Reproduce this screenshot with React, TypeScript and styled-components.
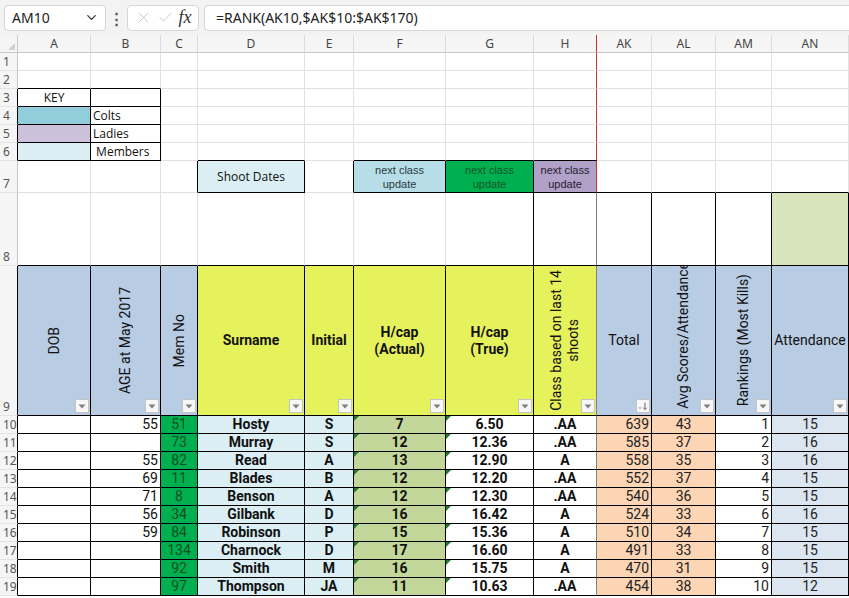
import React from "react";
import styled, { createGlobalStyle } from "styled-components";
import { ChevronDown, X, Check } from "lucide-react";

const GRID = "#e1e1e1";
const INK = "#000";
const RED = "#c8322e";
const FREEZE = "#808080";
const BLUE = "#b8cce4";
const LIME = "#e6f25c";

const GlobalStyle = createGlobalStyle`
  html, body { margin: 0; padding: 0; background: #fff; overflow: hidden; }
  body { font-family: Roboto, "Noto Sans", sans-serif; color: #111; }
`;

const Toolbar = styled.div`
  height: 35px;
  display: flex;
  align-items: center;
  padding-left: 4px;
  background: #f3f3f3;
  box-sizing: border-box;
`;

const NameBox = styled.div`
  width: 102px;
  height: 26px;
  box-sizing: border-box;
  display: flex;
  align-items: center;
  justify-content: space-between;
  padding: 0 6px 0 7px;
  background: #fff;
  border: 1px solid #d6d6d6;
  border-radius: 4px;
  font: 14px "Noto Sans", sans-serif;
  color: #222;
`;

const Dots = styled.div`
  width: 21px;
  text-align: center;
  font: bold 15px "Noto Sans", sans-serif;
  color: #555;
`;

const FxBox = styled.div`
  width: 72px;
  height: 26px;
  box-sizing: border-box;
  display: flex;
  align-items: center;
  justify-content: space-around;
  padding: 0 4px;
  background: #fff;
  border: 1px solid #d6d6d6;
  border-radius: 4px;
`;

const Fx = styled.span`
  font: italic 18px "Liberation Serif", serif;
  color: #333;
`;

const FormulaBox = styled.div`
  flex: 1;
  height: 26px;
  margin: 0 -6px 0 5px;
  box-sizing: border-box;
  display: flex;
  align-items: center;
  padding-left: 11px;
  background: #fff;
  border: 1px solid #d6d6d6;
  border-radius: 4px;
  font: 14px "Noto Sans", sans-serif;
  color: #222;
`;

const Sheet = styled.div`
  display: grid;
  grid-template-columns: 18px 73px 70px 37px 107px 49px 92px 88px 63px 55px 64px 56px 77px;
  grid-template-rows: 18px repeat(6, 18px) 32px 73px 150px repeat(10, 18px);
`;

const Corner = styled.div`
  position: relative;
  background: #f5f5f5;
  border-right: 1px solid #c8c8c8;
  border-bottom: 1px solid #c8c8c8;
  box-sizing: border-box;
  &::after {
    content: "";
    position: absolute;
    right: 2px;
    bottom: 2px;
    border-bottom: 7px solid #d0d0d0;
    border-left: 7px solid transparent;
  }
`;

const ColHead = styled.div<{ $edge?: string }>`
  display: flex;
  align-items: center;
  justify-content: center;
  background: #f5f5f5;
  border-right: 1px solid ${(p) => p.$edge || "#dcdcdc"};
  border-bottom: 1px solid #c8c8c8;
  box-sizing: border-box;
  font: 12px "Noto Sans", sans-serif;
  color: #444;
`;

const RowHead = styled.div<{ $edge: string }>`
  display: flex;
  align-items: flex-end;
  padding: 0 0 0 3px;
  background: #f5f5f5;
  border-right: 1px solid ${(p) => p.$edge};
  border-bottom: 1px solid #e4e4e4;
  box-sizing: border-box;
  font: 12px/16px "Noto Sans", sans-serif;
  color: #555;
`;

type Kind = "data" | "key" | "small";

const fonts: Record<Kind, string> = {
  data: `font: 14px/17px Roboto, sans-serif;`,
  key: `font: 12px/16px "Open Sans", sans-serif; color: #222;`,
  small: `font: 11px/14px "Liberation Sans", sans-serif; text-align: center;`,
};

const Cell = styled.div<{
  $bg?: string;
  $al: string;
  $br: string;
  $bb: string;
  $kind: Kind;
  $bold?: boolean;
  $color?: string;
  $end?: boolean;
}>`
  position: relative;
  display: flex;
  align-items: ${(p) => (p.$end ? "flex-end" : "center")};
  justify-content: ${(p) => p.$al};
  padding: ${(p) => (p.$end ? "0 1px 6px" : "0 2px")};
  overflow: hidden;
  white-space: nowrap;
  box-sizing: border-box;
  background: ${(p) => p.$bg || "#fff"};
  border-right: 1px solid ${(p) => p.$br};
  border-bottom: 1px solid ${(p) => p.$bb};
  ${(p) => fonts[p.$kind]}
  font-weight: ${(p) => (p.$bold ? 700 : 400)};
  color: ${(p) => p.$color || "#111"};
  text-align: center;
`;

const VText = styled.span`
  writing-mode: vertical-rl;
  transform: rotate(180deg);
  white-space: nowrap;
  text-align: center;
  line-height: 17px;
`;

const FilterBtn = styled.span`
  position: absolute;
  right: 1px;
  bottom: 2px;
  width: 14px;
  height: 14px;
  box-sizing: border-box;
  display: flex;
  align-items: center;
  justify-content: center;
  background: #f7f7f7;
  border: 1px solid #c4c4c4;
`;

const ErrMark = styled.span`
  position: absolute;
  top: 0;
  left: 0;
  border-top: 5px solid #1f7a35;
  border-right: 5px solid transparent;
`;

type Spec = {
  t?: React.ReactNode;
  bg?: string;
  box?: boolean;
  al?: "l" | "c" | "r";
  b?: boolean;
  kind?: Kind;
  color?: string;
  v?: boolean;
  end?: boolean;
  filter?: "f" | "s";
  mark?: boolean;
};

const COLS = ["A", "B", "C", "D", "E", "F", "G", "H", "AK", "AL", "AM", "AN"];

const blank = (): Spec[] => COLS.map(() => ({}));

const sheet: Spec[][] = [];
for (let i = 0; i < 8; i++) sheet.push(blank());

const nextClass = (
  <>
    next class
    <br />
    update
  </>
);

sheet[2][0] = { t: "KEY", box: true, kind: "key" };
sheet[2][1] = { box: true };
sheet[3][0] = { bg: "#92cddc", box: true };
sheet[3][1] = { t: "Colts", box: true, al: "l", kind: "key" };
sheet[4][0] = { bg: "#ccc0da", box: true };
sheet[4][1] = { t: "Ladies", box: true, al: "l", kind: "key" };
sheet[5][0] = { bg: "#daeef3", box: true };
sheet[5][1] = { t: "\u00a0Members", box: true, al: "l", kind: "key" };

sheet[6][3] = { t: "Shoot Dates", bg: "#daeef3", box: true, kind: "key" };
sheet[6][5] = { t: nextClass, bg: "#b7dee8", box: true, kind: "small", color: "#2a3a40" };
sheet[6][6] = { t: nextClass, bg: "#00b050", box: true, kind: "small", color: "#14562a" };
sheet[6][7] = { t: nextClass, bg: "#b1a0c7", box: true, kind: "small", color: "#262030" };

sheet[7][7] = { box: true };
sheet[7][8] = { box: true };
sheet[7][9] = { box: true };
sheet[7][10] = { box: true };
sheet[7][11] = { box: true, bg: "#d8e4bc" };

const hb = (s: Spec): Spec => ({ box: true, filter: "f", ...s });
sheet.push([
  hb({ t: "DOB", v: true, bg: BLUE }),
  hb({ t: "AGE at May 2017", v: true, bg: BLUE }),
  hb({ t: "Mem No", v: true, bg: BLUE }),
  hb({ t: "Surname", b: true, bg: LIME }),
  hb({ t: "Initial", b: true, bg: LIME }),
  hb({ t: <>H/cap<br />(Actual)</>, b: true, bg: LIME }),
  hb({ t: <>H/cap<br />(True)</>, b: true, bg: LIME }),
  hb({ t: <>Class based on last 14<br />shoots</>, v: true, bg: LIME }),
  hb({ t: "Total", bg: BLUE, filter: "s" }),
  hb({ t: "Avg Scores/Attendance", v: true, end: true, bg: BLUE }),
  hb({ t: "Rankings (Most Kills)", v: true, bg: BLUE }),
  hb({ t: "Attendance", bg: BLUE }),
]);

const members: [string, string, string, string, string, string, string, string, string, string, string][] = [
  ["55", "51", "Hosty", "S", "7", "6.50", ".AA", "639", "43", "1", "15"],
  ["", "73", "Murray", "S", "12", "12.36", ".AA", "585", "37", "2", "16"],
  ["55", "82", "Read", "A", "13", "12.90", "A", "558", "35", "3", "16"],
  ["69", "11", "Blades", "B", "12", "12.20", ".AA", "552", "37", "4", "15"],
  ["71", "8", "Benson", "A", "12", "12.30", ".AA", "540", "36", "5", "15"],
  ["56", "34", "Gilbank", "D", "16", "16.42", "A", "524", "33", "6", "16"],
  ["59", "84", "Robinson", "P", "15", "15.36", "A", "510", "34", "7", "15"],
  ["", "134", "Charnock", "D", "17", "16.60", "A", "491", "33", "8", "15"],
  ["", "92", "Smith", "M", "16", "15.75", "A", "470", "31", "9", "15"],
  ["", "97", "Thompson", "JA", "11", "10.63", ".AA", "454", "38", "10", "12"],
];

members.forEach(([age, no, name, ini, act, tru, cls, tot, avg, rank, att]) => {
  sheet.push([
    { box: true },
    { t: age, box: true, al: "r" },
    { t: no, box: true, bg: "#00b050", color: "#0f4f20" },
    { t: name, box: true, b: true, bg: "#daeef3" },
    { t: ini, box: true, b: true, bg: "#daeef3" },
    { t: act, box: true, b: true, bg: "#c4d79b", mark: true },
    { t: tru, box: true, b: true, mark: true },
    { t: cls, box: true, b: true },
    { t: tot, box: true, al: "r", bg: "#fcd5b4", color: "#222" },
    { t: avg, box: true, bg: "#fcd5b4", color: "#222" },
    { t: rank, box: true, al: "r", color: "#222" },
    { t: att, box: true, bg: "#dce6f1", color: "#222" },
  ]);
});

const isBox = (r: number, c: number) => !!sheet[r]?.[c]?.box;

const justify = { l: "flex-start", c: "center", r: "flex-end" };

function Filter({ sort }: { sort?: boolean }) {
  return (
    <FilterBtn>
      {sort ? (
        <svg width="10" height="10" viewBox="0 0 10 10">
          <path d="M0.5 6.5h3l-1.5 1.6z" fill="#8a8a8a" />
          <path d="M7 1.5v7M5.2 6.8L7 8.6l1.8-1.8" stroke="#6a6a6a" strokeWidth="1" fill="none" />
        </svg>
      ) : (
        <svg width="8" height="5" viewBox="0 0 8 5">
          <path d="M0.5 0.5h7L4 4.5z" fill="#808080" />
        </svg>
      )}
    </FilterBtn>
  );
}

export default function App() {
  return (
    <>
      <GlobalStyle />
      <Toolbar>
        <NameBox>
          AM10
          <ChevronDown size={15} strokeWidth={2} color="#333" />
        </NameBox>
        <Dots>⋮</Dots>
        <FxBox>
          <X size={17} strokeWidth={1.3} color="#c4c4c4" />
          <Check size={17} strokeWidth={1.3} color="#c4c4c4" />
          <Fx>fx</Fx>
        </FxBox>
        <FormulaBox>=RANK(AK10,$AK$10:$AK$170)</FormulaBox>
      </Toolbar>
      <Sheet>
        <Corner />
        {COLS.map((c, i) => (
          <ColHead key={c} $edge={i === 7 ? RED : undefined}>
            {c}
          </ColHead>
        ))}
        {sheet.map((row, r) => (
          <React.Fragment key={r}>
            <RowHead $edge={isBox(r, 0) ? INK : "#c8c8c8"}>{r + 1}</RowHead>
            {row.map((s, c) => {
              let br = isBox(r, c) || isBox(r, c + 1) ? INK : GRID;
              if (c === 7) br = r < 7 ? RED : FREEZE;
              const bb = isBox(r, c) || isBox(r + 1, c) ? INK : GRID;
              return (
                <Cell
                  key={c}
                  $bg={s.bg}
                  $al={justify[s.al || "c"]}
                  $br={br}
                  $bb={bb}
                  $kind={s.kind || "data"}
                  $bold={s.b}
                  $color={s.color}
                  $end={s.end}
                >
                  {s.mark && <ErrMark />}
                  {s.v ? <VText>{s.t}</VText> : s.t}
                  {s.filter && <Filter sort={s.filter === "s"} />}
                </Cell>
              );
            })}
          </React.Fragment>
        ))}
      </Sheet>
    </>
  );
}
